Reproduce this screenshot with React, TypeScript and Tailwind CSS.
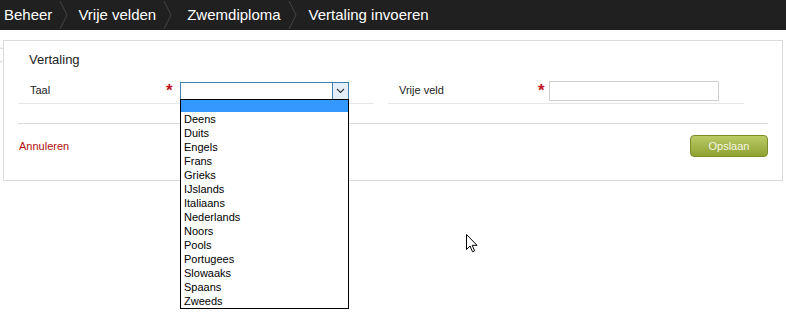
import React from "react";

const crumbs = ["Beheer", "Vrije velden", "Zwemdiploma", "Vertaling invoeren"];
const languages = [
  "Deens",
  "Duits",
  "Engels",
  "Frans",
  "Grieks",
  "IJslands",
  "Italiaans",
  "Nederlands",
  "Noors",
  "Pools",
  "Portugees",
  "Slowaaks",
  "Spaans",
  "Zweeds",
];

function Chevron() {
  return (
    <svg width="9" height="30" viewBox="0 0 9 30" className="block">
      <polyline points="1,1 8,15 1,29" fill="none" stroke="#444" strokeWidth="1" />
    </svg>
  );
}

export default function App() {
  return (
    <div
      className="relative w-[786px] h-[314px] overflow-hidden bg-white"
      style={{ fontFamily: '"Liberation Sans", Arial, sans-serif' }}
    >
      {/* breadcrumb bar */}
      <div className="flex h-[30px] items-center bg-[#202020] pl-[4px] text-[15px] text-white">
        <span className="leading-[30px]">{crumbs[0]}</span>
        <div className="ml-[7px] mr-[10px]">
          <Chevron />
        </div>
        <span className="leading-[30px]">{crumbs[1]}</span>
        <div className="ml-[7px] mr-[15px]">
          <Chevron />
        </div>
        <span className="leading-[30px]">{crumbs[2]}</span>
        <div className="ml-[7px] mr-[12px]">
          <Chevron />
        </div>
        <span className="leading-[30px]">{crumbs[3]}</span>
      </div>

      {/* panel */}
      <div className="ml-[3px] mr-[3px] mt-[10px] h-[141px] border border-[#dcdcdc] px-[14px]">
        <div className="mt-[11px] pl-[11px] text-[13px] leading-[16px] text-[#222]">Vertaling</div>
        <div className="mt-[12px] flex gap-[14px]">
          {/* Taal */}
          <div className="flex h-[24px] w-[356px] items-center border-b border-[#e6e6e6] pb-[2px]">
            <div className="w-[148px] shrink-0 pl-[12px] text-[11px] text-[#222]">Taal</div>
            <div className="w-[14px] shrink-0 text-[17px] font-bold leading-[14px] text-[#c0141c]">*</div>
            <div className="flex h-[18px] w-[169px] shrink-0 border border-[#3c7fb1] bg-white">
              <div className="flex-1" />
              <div className="flex w-[16px] items-center justify-center border-l border-[#3c7fb1] bg-[#e3eef9]">
                <svg width="9" height="6" viewBox="0 0 9 6">
                  <polyline points="1,1 4.5,4.5 8,1" fill="none" stroke="#333" strokeWidth="1.1" />
                </svg>
              </div>
            </div>
          </div>
          {/* Vrije veld */}
          <div className="flex h-[24px] w-[356px] items-center border-b border-[#e6e6e6] pb-[2px]">
            <div className="w-[150px] shrink-0 pl-[11px] text-[11px] text-[#222]">Vrije veld</div>
            <div className="w-[11px] shrink-0 text-[17px] font-bold leading-[14px] text-[#c0141c]">*</div>
            <div className="h-[20px] w-[170px] shrink-0 border border-[#cfcfcf] bg-white" />
          </div>
        </div>
        <div className="mt-[19px] border-t border-[#dcdcdc]" />
        <div className="mt-[11px] flex items-center justify-between">
          <span className="pl-[1px] text-[11px] text-[#b20d0d]">Annuleren</span>
          <button className="h-[22px] w-[78px] rounded-[4px] border border-[#7d8c2a] bg-gradient-to-b from-[#bccb66] to-[#8fa130] text-[11px] text-[#f4f6e6]">
            Opslaan
          </button>
        </div>
      </div>

      {/* left stray circle */}
      <svg className="absolute left-0 top-[47px]" width="4" height="16" viewBox="0 0 4 16">
        <path d="M0 1 A7 7 0 0 1 0 15" fill="none" stroke="#d4d4d4" strokeWidth="1" />
      </svg>

      {/* open dropdown list */}
      <div className="absolute left-[180px] top-[99px] w-[169px] border border-black bg-white text-[11px] text-black">
        <div className="h-[12px] bg-[#3399ff]" />
        {languages.map((l) => (
          <div key={l} className="h-[14px] pl-[3px] leading-[14px]">
            {l}
          </div>
        ))}
      </div>

      {/* mouse cursor */}
      <svg className="absolute left-[466px] top-[234px]" width="13" height="20" viewBox="0 0 13 20">
        <path
          d="M0.5 0.5 L0.5 15.5 L4 12 L6.5 17.8 L8.6 16.9 L6.2 11.3 L11 11.3 Z"
          fill="white"
          stroke="black"
          strokeWidth="1"
          strokeLinejoin="miter"
        />
      </svg>
    </div>
  );
}
